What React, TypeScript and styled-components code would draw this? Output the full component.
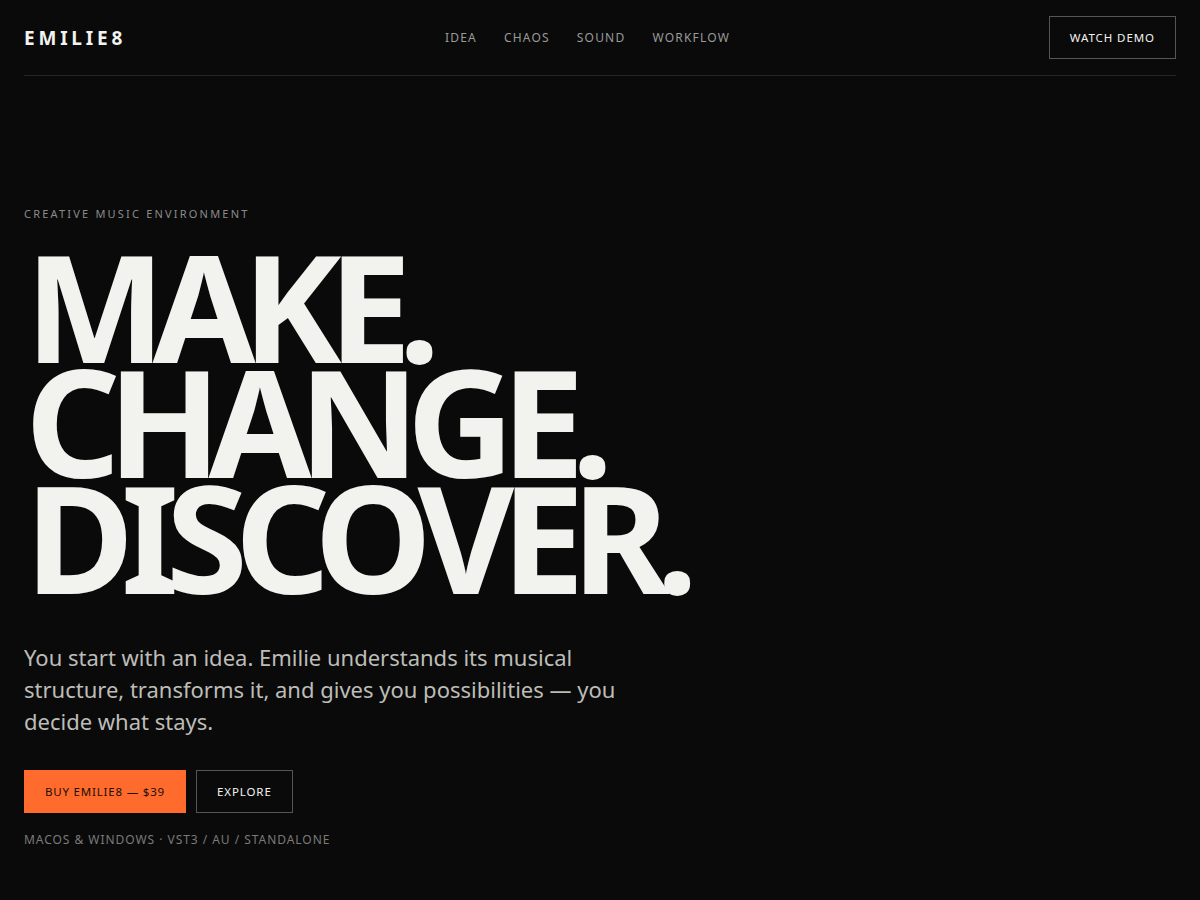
import React from "react";
import styled, { createGlobalStyle } from "styled-components";

const Global = createGlobalStyle`
  html, body { margin: 0; padding: 0; background: #0a0a0a; }
  body { font-family: "Noto Sans", "Open Sans", sans-serif; color: #f2f2ee; }
  * { box-sizing: border-box; }
`;

const Page = styled.div`
  min-height: 900px;
  background: #0a0a0a;
  padding: 0 24px;
`;

const Header = styled.header`
  height: 76px;
  display: flex;
  align-items: center;
  justify-content: space-between;
  border-bottom: 1px solid #262626;
`;

const Logo = styled.div`
  font-size: 19px;
  font-weight: 700;
  letter-spacing: 0.2em;
  color: #f2f2ee;
`;

const Nav = styled.nav`
  display: flex;
  gap: 27px;
`;

const NavLink = styled.a`
  font-size: 12px;
  letter-spacing: 0.1em;
  color: #9a9a9a;
  text-decoration: none;
`;

const OutlineButton = styled.button`
  height: 43px;
  padding: 0 20px;
  background: transparent;
  border: 1px solid #555;
  color: #f2f2ee;
  font-family: inherit;
  font-size: 11.5px;
  letter-spacing: 0.08em;
`;

const Hero = styled.main`
  padding-top: 130px;
`;

const Eyebrow = styled.div`
  font-size: 11px;
  letter-spacing: 0.2em;
  color: #8a8a8a;
`;

const Headline = styled.h1`
  margin: 27px 0 0;
  font-size: 149px;
  line-height: 0.775;
  font-weight: 700;
  letter-spacing: -0.088em;
  color: #f2f2ee;
  padding: 0 0 10px 1px;
`;

const Line = styled.div``;

const Lead = styled.p`
  margin: 37px 0 0;
  max-width: 630px;
  font-size: 22px;
  line-height: 32px;
  color: #bdbdb8;
`;

const Actions = styled.div`
  display: flex;
  gap: 10px;
  margin-top: 33px;
`;

const PrimaryButton = styled.button`
  height: 43px;
  padding: 0 21px;
  background: #ff6b2c;
  border: none;
  color: #1a0e08;
  font-family: inherit;
  font-size: 11.5px;
  letter-spacing: 0.07em;
`;

const Meta = styled.div`
  margin-top: 18px;
  font-size: 12px;
  letter-spacing: 0.08em;
  color: #7a7a7a;
`;

export default function App() {
  return (
    <>
      <Global />
      <Page>
        <Header>
          <Logo>EMILIE8</Logo>
          <Nav>
            <NavLink>IDEA</NavLink>
            <NavLink>CHAOS</NavLink>
            <NavLink>SOUND</NavLink>
            <NavLink>WORKFLOW</NavLink>
          </Nav>
          <OutlineButton>WATCH DEMO</OutlineButton>
        </Header>
        <Hero>
          <Eyebrow>CREATIVE MUSIC ENVIRONMENT</Eyebrow>
          <Headline>
            <Line>MAKE.</Line>
            <Line>CHANGE.</Line>
            <Line>DISCOVER.</Line>
          </Headline>
          <Lead>
            You start with an idea. Emilie understands its musical structure,
            transforms it, and gives you possibilities — you decide what stays.
          </Lead>
          <Actions>
            <PrimaryButton>BUY EMILIE8 — $39</PrimaryButton>
            <OutlineButton>EXPLORE</OutlineButton>
          </Actions>
          <Meta>MACOS &amp; WINDOWS · VST3 / AU / STANDALONE</Meta>
        </Hero>
      </Page>
    </>
  );
}
